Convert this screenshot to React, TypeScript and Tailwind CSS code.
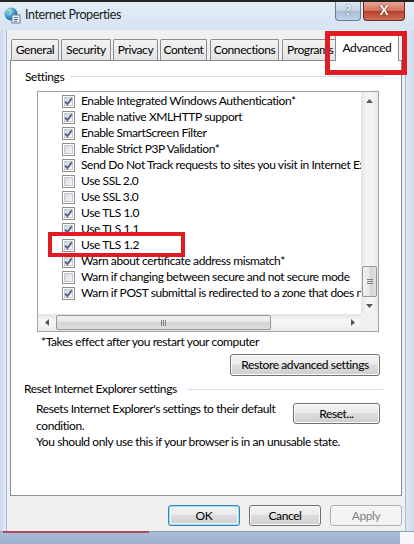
import React from 'react';

const settings = [
  { label: 'Enable Integrated Windows Authentication*', checked: true },
  { label: 'Enable native XMLHTTP support', checked: true },
  { label: 'Enable SmartScreen Filter', checked: true },
  { label: 'Enable Strict P3P Validation*', checked: false },
  { label: 'Send Do Not Track requests to sites you visit in Internet Explorer*', checked: true },
  { label: 'Use SSL 2.0', checked: false },
  { label: 'Use SSL 3.0', checked: false },
  { label: 'Use TLS 1.0', checked: true },
  { label: 'Use TLS 1.1', checked: true },
  { label: 'Use TLS 1.2', checked: true },
  { label: 'Warn about certificate address mismatch*', checked: true },
  { label: 'Warn if changing between secure and not secure mode', checked: false },
  { label: 'Warn if POST submittal is redirected to a zone that does not permit posts', checked: true },
];

const tabs = [
  { name: 'General', w: 'w-[48px]' },
  { name: 'Security', w: 'w-[50px]' },
  { name: 'Privacy', w: 'w-[45px]' },
  { name: 'Content', w: 'w-[47px]' },
  { name: 'Connections', w: 'w-[69px]' },
];

const btn =
  'flex items-center justify-center rounded-[3px] border border-[#707070] bg-[linear-gradient(#f2f2f2,#ebebeb_45%,#dddddd_50%,#cfcfcf)] shadow-[inset_0_0_0_1px_#fcfcfc]';

function Checkbox({ checked }: { checked: boolean }) {
  return (
    <div className="w-[13px] h-[13px] border border-[#8e8f8f] bg-white p-[1px] shrink-0">
      <div className="relative w-full h-full border border-[#c6cad0] bg-[linear-gradient(135deg,#d4d8de,#f7f7f7)]">
        {checked && (
          <svg className="absolute -left-[1px] -top-[1px]" width="9" height="9" viewBox="0 0 9 9">
            <path d="M1.2 4.6 L3.4 7 L7.8 1.4" fill="none" stroke="#4a5d8c" strokeWidth="1.8" />
          </svg>
        )}
      </div>
    </div>
  );
}

function Arrow({ dir }: { dir: 'up' | 'down' | 'left' | 'right' }) {
  const d = {
    up: 'M0 4 L3.5 0 L7 4 Z',
    down: 'M0 0 L7 0 L3.5 4 Z',
    left: 'M4 0 L4 7 L0 3.5 Z',
    right: 'M0 0 L4 3.5 L0 7 Z',
  }[dir];
  const horiz = dir === 'left' || dir === 'right';
  return (
    <svg width={horiz ? 4 : 7} height={horiz ? 7 : 4} viewBox={horiz ? '0 0 4 7' : '0 0 7 4'}>
      <path d={d} fill="#5a5a5a" />
    </svg>
  );
}

function AppIcon() {
  return (
    <svg width="17" height="17" viewBox="0 0 17 17">
      <defs>
        <radialGradient id="gl" cx="0.35" cy="0.3" r="0.8">
          <stop offset="0" stopColor="#c9ecff" />
          <stop offset="0.5" stopColor="#3d9bd8" />
          <stop offset="1" stopColor="#15589a" />
        </radialGradient>
      </defs>
      <circle cx="7" cy="7" r="6.5" fill="url(#gl)" />
      <path d="M3 4 Q5 3 6 5 Q5 7 3 7 Z M8 2 Q11 3 10 6 Q8 6 8 2 Z" fill="#6fbf5a" opacity="0.8" />
      <rect x="8" y="8" width="8" height="8" fill="#f4f6f8" stroke="#6d7b8c" strokeWidth="1" />
      <path d="M10 10.5 H14 M10 12.5 H14 M10 14.2 H13" stroke="#3b6fb0" strokeWidth="1" />
    </svg>
  );
}

export default function App() {
  return (
    <div className="relative w-[414px] h-[544px] overflow-hidden bg-[#d8e4f2] text-black text-[12px] tracking-[-0.4px] font-['Lato','Noto_Sans',sans-serif]">
      <div className="h-[2px] bg-[#222]" />

      {/* title bar */}
      <div className="h-[28px] flex items-start bg-[linear-gradient(#e4edf8,#d6e3f2)]">
        <div className="flex items-center h-[26px] pl-[4px] gap-[4px]">
          <AppIcon />
          <span className="text-[12.5px] text-[#1b1b1b]">Internet Properties</span>
        </div>
        <div className="ml-auto mr-[9px] flex gap-[2px]">
          <div className="w-[26px] h-[19px] rounded-b-[4px] border border-t-0 border-[#6a7b8f] bg-[linear-gradient(#dfe9f4,#c2d3e6_50%,#a9bfd7_50%,#bfd2e6)] flex items-center justify-center text-[13px] font-bold text-[#f8f8f8] [text-shadow:0_0_2px_#34465b]">
            ?
          </div>
          <div className="w-[42px] h-[19px] rounded-b-[4px] border border-t-0 border-[#6f2a25] bg-[linear-gradient(#e8a493,#d0705a_50%,#b83f2a_50%,#cf6d55)] flex items-center justify-center text-[13px] font-bold text-white [text-shadow:0_0_2px_#4d1208]">
            X
          </div>
        </div>
      </div>

      <div className="flex h-[501px]">
        <div className="w-[7px] bg-[linear-gradient(90deg,#cbdaec,#dde8f5)] border-r border-[#a7b9cf]" />
        <div className="w-[398px] bg-[#f0f0f0] flex flex-col">
          {/* tabs */}
          <div className="relative z-10 h-[30px] flex items-end pl-[4px]">
            {tabs.map((t, i) => (
              <div
                key={t.name}
                className={`${t.w} h-[21px] ${i === 0 ? '' : i >= 4 ? 'ml-[3px]' : 'ml-[2px]'} border border-b-0 border-[#898c95] rounded-t-[2px] bg-[linear-gradient(#f3f3f3,#e3e3e3)] flex items-center justify-center`}
              >
                {t.name}
              </div>
            ))}
            <div className="w-[55px] h-[21px] ml-[3px] border border-b-0 border-[#898c95] rounded-t-[2px] bg-[linear-gradient(#f3f3f3,#e3e3e3)] flex items-center pl-[4px] overflow-hidden whitespace-nowrap">
              Programs
            </div>
            <div className="relative w-[64px] h-[26px] -ml-[2px] -mb-px border border-b-0 border-[#898c95] rounded-t-[2px] bg-white flex items-start justify-center pt-[3px]">
              Advanced
            </div>
          </div>

          {/* tab panel */}
          <div className="mx-[3px] h-[436px] border border-[#898c95] bg-white flex flex-col">
            <div className="mt-[8px] h-[15px] flex items-center pl-[14px] pr-[17px]">
              <span>Settings</span>
              <div className="flex-1 ml-[6px] h-px bg-[#d5dfe5]" />
            </div>

            {/* listbox */}
            <div className="ml-[26px] mt-[7px] w-[342px] h-[241px] border border-[#a3a3a3] flex flex-col">
              <div className="flex h-[222px]">
                <div className="flex-1 min-w-0 overflow-hidden pt-[1px]">
                  {settings.map(s => (
                    <div key={s.label} className="h-[16px] flex items-center pl-[24px] whitespace-nowrap">
                      <Checkbox checked={s.checked} />
                      <span className="ml-[6px]">{s.label}</span>
                    </div>
                  ))}
                </div>
                {/* vertical scrollbar */}
                <div className="w-[17px] bg-[linear-gradient(90deg,#e3e3e3,#f4f4f4_30%,#f4f4f4_70%,#e8e8e8)] flex flex-col items-center">
                  <div className="h-[17px] flex items-center justify-center">
                    <Arrow dir="up" />
                  </div>
                  <div className="flex-1" />
                  <div className="w-[15px] h-[31px] rounded-[2px] border border-[#979797] bg-[linear-gradient(90deg,#f2f2f2,#e6e6e6_50%,#d4d4d4_50%,#dedede)] flex flex-col items-center justify-center gap-[1px]">
                    <div className="w-[6px] h-px bg-[#7d7d7d]" />
                    <div className="w-[6px] h-px bg-[#7d7d7d]" />
                    <div className="w-[6px] h-px bg-[#7d7d7d]" />
                  </div>
                  <div className="h-[17px] flex items-center justify-center">
                    <Arrow dir="down" />
                  </div>
                </div>
              </div>
              {/* horizontal scrollbar */}
              <div className="flex h-[17px]">
                <div className="flex-1 flex items-center bg-[linear-gradient(#e3e3e3,#f4f4f4_30%,#f4f4f4_70%,#e8e8e8)]">
                  <div className="w-[17px] flex items-center justify-center">
                    <Arrow dir="left" />
                  </div>
                  <div className="ml-[1px] w-[215px] h-[15px] rounded-[2px] border border-[#979797] bg-[linear-gradient(#f2f2f2,#e6e6e6_50%,#d4d4d4_50%,#dedede)] flex items-center justify-center gap-[1px]">
                    <div className="w-px h-[6px] bg-[#7d7d7d]" />
                    <div className="w-px h-[6px] bg-[#7d7d7d]" />
                    <div className="w-px h-[6px] bg-[#7d7d7d]" />
                  </div>
                  <div className="flex-1" />
                  <div className="w-[17px] flex items-center justify-center">
                    <Arrow dir="right" />
                  </div>
                </div>
                <div className="w-[17px] bg-[#f0f0f0]" />
              </div>
            </div>

            <div className="ml-[30px] mt-[2px] h-[16px] flex items-center">*Takes effect after you restart your computer</div>

            <div className="mt-[4px] mr-[21px] flex justify-end">
              <div className={`${btn} w-[150px] h-[22px]`}>Restore advanced settings</div>
            </div>

            <div className="mt-[6px] h-[14px] flex items-center pl-[13px] pr-[18px]">
              <span className="whitespace-nowrap">Reset Internet Explorer settings</span>
              <div className="flex-1 ml-[10px] h-px bg-[#d5dfe5]" />
            </div>

            <div className="mt-[4px] flex pl-[25px] pr-[21px]">
              <div className="flex-1 leading-[17px] whitespace-nowrap">
                Resets Internet Explorer's settings to their default
                <br />
                condition.
              </div>
              <div className={`${btn} mt-[3px] w-[87px] h-[21px]`}>Reset...</div>
            </div>

            <div className="pl-[25px] mt-[0px] h-[16px] flex items-center">
              You should only use this if your browser is in an unusable state.
            </div>
          </div>

          {/* dialog buttons */}
          <div className="mt-[9px] mr-[3px] flex justify-end gap-[9px]">
            <div className="w-[72px] h-[21px] flex items-center justify-center rounded-[3px] border border-[#3c7fb1] bg-[linear-gradient(#f2f2f2,#ebebeb_45%,#dddddd_50%,#cfcfcf)] shadow-[inset_0_0_0_1px_#9ee0f7,inset_0_0_0_2px_#e6f6fc]">
              OK
            </div>
            <div className={`${btn} w-[72px] h-[21px]`}>Cancel</div>
            <div className="w-[72px] h-[21px] flex items-center justify-center rounded-[3px] border border-[#adb2b5] bg-[#f4f4f4] text-[#838383]">
              Apply
            </div>
          </div>
        </div>
        <div className="w-[9px] border-l border-[#a7b9cf] bg-[linear-gradient(90deg,#dde8f5,#cbdaec)]" />
      </div>

      {/* bottom frame */}
      <div className="relative h-[13px] bg-[linear-gradient(#a9bdd6,#9ab2cf)] border-t border-[#8aa0bb]">
        <div className="absolute left-[3px] -top-[1px] w-[146px] h-[2px] bg-[#b2485a]" />
        <div className="absolute right-0 top-0 w-[14px] h-full bg-[#f4f6f9]" />
      </div>

      {/* red highlight rectangles */}
      <div className="absolute left-[325px] top-[31px] w-[82px] h-[44px] border-[5px] border-[#e01b24] z-20" />
      <div className="absolute left-[48px] top-[232px] w-[137px] h-[25px] border-[4px] border-[#e01b24] z-20" />
    </div>
  );
}
